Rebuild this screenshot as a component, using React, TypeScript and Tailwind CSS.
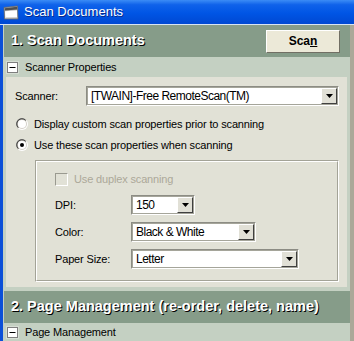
import React from "react";

const Minus = () => (
  <svg width="13" height="13" viewBox="0 0 13 13" className="shrink-0">
    <rect x="0.5" y="0.5" width="12" height="12" fill="none" stroke="#e8ece6" strokeDasharray="1 1" />
    <rect x="1.5" y="1.5" width="10" height="10" fill="#ffffff" stroke="#7f7f7f" />
    <rect x="3.5" y="6" width="6" height="1" fill="#000" />
  </svg>
);

const Radio = ({ checked }: { checked?: boolean }) => (
  <svg width="12" height="12" viewBox="0 0 12 12" className="shrink-0">
    <defs>
      <linearGradient id={checked ? "rg1" : "rg0"} x1="0" y1="0" x2="1" y2="1">
        <stop offset="0" stopColor="#808080" />
        <stop offset="0.5" stopColor="#a8a8a0" />
        <stop offset="0.55" stopColor="#ffffff" />
        <stop offset="1" stopColor="#ffffff" />
      </linearGradient>
    </defs>
    <circle cx="6" cy="6" r="6" fill={`url(#${checked ? "rg1" : "rg0"})`} />
    <circle cx="6" cy="6" r="5" fill="#d4d0c8" />
    <path d="M2.3 9.5 A5 5 0 0 1 9.5 2.3" fill="none" stroke="#404040" strokeWidth="1" />
    <circle cx="6" cy="6" r="4" fill="#ffffff" />
    {checked && <circle cx="6" cy="6" r="2" fill="#000" />}
  </svg>
);

const DropBtn = () => (
  <div className="w-[16px] h-[16px] bg-[#e1e0d6] border-t border-l border-t-white border-l-white border-b border-r border-b-[#404040] border-r-[#404040] flex items-center justify-center shrink-0">
    <svg width="7" height="4" viewBox="0 0 7 4">
      <path d="M0 0 H7 L3.5 4 Z" fill="#000" />
    </svg>
  </div>
);

const Select = ({ value, w }: { value: string; w: string }) => (
  <div className={`${w} h-[20px] border border-t-[#8c8c84] border-l-[#8c8c84] border-b-white border-r-white`}>
    <div className="h-full w-full border border-[#a5a59a] bg-white flex items-center justify-between">
      <span className="pl-[3px] text-[12px] tracking-[-0.5px] leading-none text-black">{value}</span>
      <DropBtn />
    </div>
  </div>
);

const WinIcon = () => (
  <svg width="16" height="16" viewBox="0 0 16 16" className="shrink-0">
    <path d="M1 3.5 L14.5 2 L15 15 L1.5 15 Z" fill="#b8b8b8" />
    <path d="M1.8 4.2 L14 2.8 L14.1 5.6 L1.9 6.6 Z" fill="#505050" />
    <path d="M2 7.2 L14.1 6.2 L14.3 14 L2.4 14.2 Z" fill="#ffffff" />
    <path d="M2.4 14.2 L14.3 14 L14.3 13 L2.4 13.2 Z" fill="#d0d0d0" />
    <path d="M1 3.5 L14.5 2 L15 15 L1.5 15 Z" fill="none" stroke="#6a6a6a" strokeWidth="0.8" />
  </svg>
);

const T = "text-[11px] tracking-[-0.15px]";

export default function App() {
  return (
    <div className="w-[354px] h-[341px] overflow-hidden bg-[#0b4fd8] flex flex-col font-['Liberation_Sans',Arial,sans-serif]">
      {/* title bar */}
      <div className="h-[24px] shrink-0 bg-[linear-gradient(180deg,#3b8cf6_0%,#0f62ea_20%,#0055e5_55%,#0048d2_100%)] flex items-center pl-[3px] gap-[5px]">
        <WinIcon />
        <span className="text-white text-[13px] [text-shadow:1px_1px_0_#0a2a8a]">Scan Documents</span>
      </div>
      <div className="h-px shrink-0 bg-[#d8e4f4]" />
      <div className="flex-1 flex">
        <div className="w-[3px] shrink-0" />
        <div className="flex-1 bg-[#c4d0c2] flex flex-col">
          {/* header 1 */}
          <div className="h-[32px] shrink-0 ml-px bg-[#869c89] flex items-center justify-between pl-[7px] pr-[10px]">
            <span className="text-white font-bold text-[14.5px] [text-shadow:1px_1px_0_#000]">1. Scan Documents</span>
            <button className="w-[74px] h-[23px] bg-[#ece9d8] border border-t-white border-l-white border-b-[#716f64] border-r-[#716f64] text-[12px] font-bold text-black">
              Sca<span className="underline">n</span>
            </button>
          </div>
          {/* Scanner Properties row */}
          <div className="h-[20px] shrink-0 flex items-center pl-[3px] gap-[6px]">
            <Minus />
            <span className={`${T} text-black`}>Scanner Properties</span>
          </div>
          {/* content */}
          <div className="h-[210px] shrink-0 mx-[3px] bg-[#e1e1d6] flex flex-col pt-[9px] pl-[9px]">
            <div className="flex items-center h-[20px]">
              <span className={`w-[71px] ${T} text-black`}>Scanner:</span>
              <Select w="w-[253px]" value="[TWAIN]-Free RemoteScan(TM)" />
            </div>
            <div className="flex items-center gap-[6px] mt-[12px] pl-[1px] h-[12px]">
              <Radio />
              <span className={`${T} text-black`}>Display custom scan properties prior to scanning</span>
            </div>
            <div className="flex items-center gap-[6px] mt-[9px] pl-[1px] h-[12px]">
              <Radio checked />
              <span className={`${T} text-black`}>Use these scan properties when scanning</span>
            </div>
            <div className="mt-[9px] ml-[20px] w-[304px] h-[122px] border border-t-[#a3a397] border-l-[#a3a397] border-b-white border-r-white">
              <div className="h-full w-full border border-t-white border-l-white border-b-[#a3a397] border-r-[#a3a397] flex flex-col pl-[18px] pt-[11px]">
                <div className="flex items-center gap-[6px] h-[13px]">
                  <div className="w-[13px] h-[13px] border border-t-[#9a9a90] border-l-[#9a9a90] border-b-white border-r-white bg-[#e1e1d6]" />
                  <span className={`${T} text-[#aca899]`}>Use duplex scanning</span>
                </div>
                <div className="flex items-center h-[20px] mt-[9px]">
                  <span className={`w-[76px] ${T} text-black`}>DPI:</span>
                  <Select w="w-[64px]" value="150" />
                </div>
                <div className="flex items-center h-[20px] mt-[7px]">
                  <span className={`w-[76px] ${T} text-black`}>Color:</span>
                  <Select w="w-[125px]" value="Black & White" />
                </div>
                <div className="flex items-center h-[20px] mt-[7px]">
                  <span className={`w-[76px] ${T} text-black`}>Paper Size:</span>
                  <Select w="w-[168px]" value="Letter" />
                </div>
              </div>
            </div>
          </div>
          <div className="h-[4px] shrink-0" />
          {/* header 2 */}
          <div className="h-[32px] shrink-0 ml-px bg-[#869c89] flex items-center pl-[7px]">
            <span className="text-white font-bold text-[14.5px] [text-shadow:1px_1px_0_#000]">2. Page Management (re-order, delete, name)</span>
          </div>
          <div className="h-[18px] shrink-0 flex items-center pl-[3px] gap-[6px]">
            <Minus />
            <span className={`${T} text-black`}>Page Management</span>
          </div>
        </div>
        <div className="w-[4px] shrink-0 bg-[#aca899]" />
      </div>
    </div>
  );
}
